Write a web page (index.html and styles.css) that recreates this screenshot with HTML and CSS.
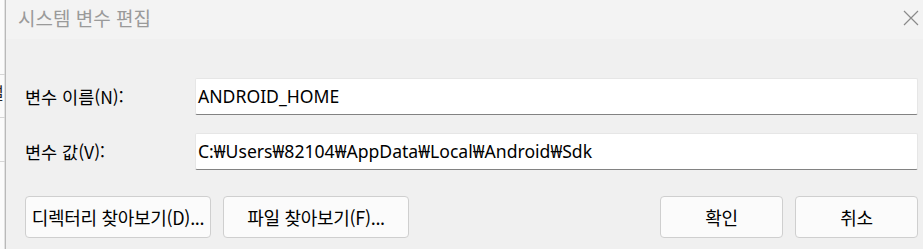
FILE: index.html
```html
<!DOCTYPE html>
<html lang="ko">
<head>
  <meta charset="UTF-8">
  <title>시스템 변수 편집</title>
  <link rel="stylesheet" href="styles.css">
</head>
<body>
  <div class="desk">
    <!-- window behind the dialog -->
    <div class="back-window">
      <div class="back-row"><span class="back-glyph">설</span></div>
      <div class="back-row"></div>
      <div class="back-row"></div>
    </div>

    <div class="dialog">
      <div class="titlebar">
        <span class="title">시스템 변수 편집</span>
        <svg class="close" width="16" height="16" viewBox="0 0 16 16">
          <path d="M1 1 L15 15 M15 1 L1 15" stroke="#8a8a8a" stroke-width="1.2" fill="none"/>
        </svg>
      </div>

      <div class="content">
        <div class="field">
          <label class="field-label">변수 이름(N):</label>
          <div class="input">ANDROID_HOME</div>
        </div>
        <div class="field">
          <label class="field-label">변수 값(V):</label>
          <div class="input">C:₩Users₩82104₩AppData₩Local₩Android₩Sdk</div>
        </div>

        <div class="actions">
          <button class="btn btn-wide">디렉터리 찾아보기(D)...</button>
          <button class="btn btn-wide">파일 찾아보기(F)...</button>
          <div class="spacer"></div>
          <button class="btn btn-small">확인</button>
          <button class="btn btn-small">취소</button>
        </div>
      </div>
    </div>
  </div>
</body>
</html>
```

FILE: styles.css
```css
* {
  margin: 0;
  padding: 0;
  box-sizing: border-box;
}

body {
  width: 923px;
  height: 249px;
  overflow: hidden;
  font-family: "Noto Sans", "Noto Sans CJK KR", sans-serif;
  color: #000;
  background: #f0f0f0;
}

.desk {
  display: flex;
  height: 249px;
}

.back-window {
  width: 5px;
  background: #fbfbfb;
  padding-top: 74px;
  overflow: hidden;
}

.back-row {
  height: 44px;
  border-top: 1px solid #d6d6d6;
  position: relative;
}

.back-row:first-child {
  height: 43px;
}

.back-glyph {
  position: absolute;
  left: -11px;
  top: 10px;
  font-size: 16px;
  line-height: 1;
  color: #222;
}

.dialog {
  flex: 1;
  border-left: 1px solid #b9b9b9;
  background: #f0f0f0;
  box-shadow: -1px 0 0 #e2e2e2;
}

.titlebar {
  height: 39px;
  background: #f3f3f3;
  display: flex;
  align-items: center;
  justify-content: space-between;
  padding: 0 4px 4px 12px;
}

.title {
  font-size: 19px;
  color: #9a9a9a;
  font-family: "Noto Sans CJK KR", sans-serif;
}

.content {
  padding: 39px 5px 0 19px;
}

.field {
  display: flex;
  align-items: center;
  height: 37px;
  margin-bottom: 18px;
}

.field-label {
  width: 170px;
  font-size: 17.5px;
  font-family: "Noto Sans CJK KR", sans-serif;
}

.input {
  flex: 1;
  height: 37px;
  background: #fff;
  border: 1px solid #e6e6e6;
  border-bottom: 1px solid #828282;
  border-radius: 2px;
  padding: 0 0 1px 2px;
  display: flex;
  align-items: center;
  font-size: 17.6px;
  font-family: "Noto Sans", "Noto Sans CJK KR", sans-serif;
}

.actions {
  display: flex;
  margin-top: 26px;
  gap: 12px;
}

.spacer {
  flex: 1;
}

.btn {
  height: 42px;
  background: #fbfbfb;
  border: 1px solid #cfcfcf;
  border-radius: 4px;
  font-size: 18px;
  font-family: "Noto Sans CJK KR", sans-serif;
  color: #000;
  white-space: nowrap;
  letter-spacing: -0.3px;
}

.btn-wide {
  width: 186px;
}

.btn-small {
  width: 123px;
}
```
